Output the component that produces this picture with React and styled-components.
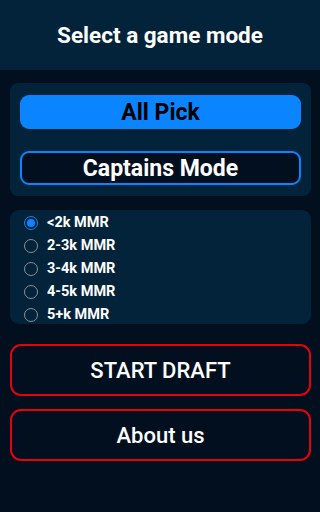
import React, { useState } from 'react';
import styled, { createGlobalStyle } from 'styled-components';

const GlobalStyle = createGlobalStyle`
  html, body {
    margin: 0;
    padding: 0;
    background: #010f1f;
    font-family: Roboto, "Liberation Sans", sans-serif;
  }
`

const Screen = styled.div`
  width: 320px;
  height: 512px;
  background: #010f1f;
  display: flex;
  flex-direction: column;
`

const Header = styled.header`
  height: 70px;
  background: #03233a;
  display: flex;
  align-items: center;
  justify-content: center;
  color: white;
  font-size: 22.5px;
  font-weight: 700;
`

const Content = styled.div`
  display: flex;
  flex-direction: column;
  padding: 13px 9px 0 10px;
`

const Panel = styled.div`
  background: #03233a;
  border-radius: 8px;
  display: flex;
  flex-direction: column;
`

const ModePanel = styled(Panel)`
  padding: 12px 10px 11px;
  gap: 22px;
`

const ModeButton = styled.button`
  height: 34px;
  border-radius: 9px;
  border: 2px solid #0a84ff;
  background: ${p => (p.$active ? '#0a84ff' : '#010f1f')};
  color: ${p => (p.$active ? '#000' : '#fff')};
  font-family: Roboto, "Liberation Sans", sans-serif;
  font-size: 23px;
  font-weight: 700;
  padding: 0;
  cursor: pointer;
`

const RankPanel = styled(Panel)`
  margin-top: 14px;
  padding: 1px 0 0 14px;
  height: 114px;
  box-sizing: border-box;
  border-radius: 9px;
`

const RankRow = styled.label`
  display: flex;
  flex-shrink: 0;
  align-items: center;
  height: 23px;
  gap: 9px;
  color: white;
  font-size: 14.5px;
  font-weight: 700;
  cursor: pointer;
`

const RadioDot = styled.span`
  width: 14px;
  height: 14px;
  box-sizing: border-box;
  border-radius: 50%;
  border: 1.5px solid ${p => (p.$checked ? '#0a84ff' : '#8a8f96')};
  display: flex;
  align-items: center;
  justify-content: center;
  &::after {
    content: '';
    width: 8px;
    height: 8px;
    border-radius: 50%;
    background: ${p => (p.$checked ? '#0a84ff' : 'transparent')};
  }
`

const ActionButton = styled.button`
  height: 52px;
  border-radius: 11px;
  border: 2px solid #e8000b;
  background: #010f1f;
  color: white;
  font-family: Roboto, "Liberation Sans", sans-serif;
  font-size: 22px;
  font-weight: 500;
  margin-top: ${p => p.$gap}px;
  cursor: pointer;
`

const ranks = ['<2k MMR', '2-3k MMR', '3-4k MMR', '4-5k MMR', '5+k MMR']

const App = () => {
  const [mode, setMode] = useState('all')
  const [rank, setRank] = useState(0)

  return (
    <>
      <GlobalStyle />
      <Screen>
        <Header>Select a game mode</Header>
        <Content>
          <ModePanel>
            <ModeButton $active={mode === 'all'} onClick={() => setMode('all')}>All Pick</ModeButton>
            <ModeButton $active={mode === 'cm'} onClick={() => setMode('cm')}>Captains Mode</ModeButton>
          </ModePanel>
          <RankPanel>
            {ranks.map((r, i) => (
              <RankRow key={r} onClick={() => setRank(i)}>
                <RadioDot $checked={rank === i} />
                {r}
              </RankRow>
            ))}
          </RankPanel>
          <ActionButton $gap={20}>START DRAFT</ActionButton>
          <ActionButton $gap={13}>About us</ActionButton>
        </Content>
      </Screen>
    </>
  )
}

export default App
